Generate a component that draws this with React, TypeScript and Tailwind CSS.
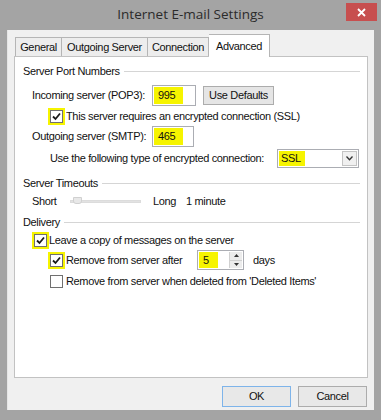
import React from "react";

const font = { fontFamily: "Tahoma, 'Liberation Sans', Arial, sans-serif", letterSpacing: "-0.35px" };

function Check({ checked, hl }: { checked: boolean; hl?: boolean }) {
  const box = (
    <div className="w-[13px] h-[13px] border border-[#707070] bg-white flex items-center justify-center">
      {checked && (
        <svg width="9" height="9" viewBox="0 0 9 9">
          <path d="M1 4.5 L3.5 7 L8 1.5" stroke="#1a1a1a" strokeWidth="1.8" fill="none" />
        </svg>
      )}
    </div>
  );
  if (hl) return <div className="p-[2px] bg-[#f6f400] shrink-0">{box}</div>;
  return <div className="p-[2px] shrink-0">{box}</div>;
}

function Header({ label }: { label: string }) {
  return (
    <div className="flex items-center h-[14px] pl-[8px] pr-[7px] gap-[4px]">
      <span className="whitespace-nowrap">{label}</span>
      <div className="flex-1 h-px bg-[#d5d5d5]" />
    </div>
  );
}

function NumBox({ value, w, hlw }: { value: string; w: string; hlw: string }) {
  return (
    <div className={`${w} shrink-0 h-[21px] border border-[#abadb3] bg-white flex items-stretch p-[1px]`}>
      <div className={`${hlw} bg-[#f6f400] flex items-center pl-[4px]`}>{value}</div>
    </div>
  );
}

export default function App() {
  return (
    <div className="w-[381px] h-[420px] bg-[#a4a4a4] flex flex-col text-[11px] text-[#111] whitespace-nowrap" style={font}>
      <div className="h-[30px] grid grid-cols-[1fr_auto_1fr] items-center">
        <div />
        <div className="text-[13.5px] text-[#2b2b2b] pb-[1px]" style={{ fontFamily: "'Open Sans', 'Noto Sans', sans-serif", letterSpacing: "0px" }}>
          Internet E-mail Settings
        </div>
        <div className="flex justify-end self-start pt-[3px] pr-[4px]">
          <div className="w-[31px] h-[18px] bg-[#c74f4f] flex items-center justify-center">
            <svg width="9" height="9" viewBox="0 0 9 9">
              <path d="M1 1 L8 8 M8 1 L1 8" stroke="white" strokeWidth="1.8" />
            </svg>
          </div>
        </div>
      </div>
      <div className="mx-[7px] mb-[10px] flex-1 bg-[#f0f0f0] border-l border-[#e6e6e6] flex flex-col px-[6px]">
        <div className="h-[26px] flex items-end pl-[1px] pt-[4px]">
          <div className="w-[47px] h-[19px] border border-b-0 border-[#b5b5b5] bg-[#ededed] flex items-center justify-center">General</div>
          <div className="w-[86px] h-[19px] border border-b-0 border-l-0 border-[#b5b5b5] bg-[#ededed] flex items-center justify-center">Outgoing Server</div>
          <div className="w-[61px] h-[19px] border border-b-0 border-l-0 border-[#b5b5b5] bg-[#ededed] flex items-center justify-center">Connection</div>
          <div className="w-[61px] h-[23px] border border-b-0 border-l-0 border-[#b5b5b5] bg-white flex items-start justify-center pt-[3px] -mb-px relative">Advanced</div>
        </div>
        <div className="h-[322px] border border-[#c2c2c2] bg-white flex flex-col pt-[7px]">
          <Header label="Server Port Numbers" />
          <div className="mt-[7px] h-[21px] flex items-center pl-[17px]">
            <span className="w-[120px] shrink-0">Incoming server (POP3):</span>
            <NumBox value="995" w="w-[44px]" hlw="w-[29px]" />
            <div className="ml-[7px] w-[71px] shrink-0 h-[19px] border border-[#acacac] bg-[#e5e5e5] flex items-center justify-center">Use Defaults</div>
          </div>
          <div className="h-[20px] flex items-center pl-[33px] gap-[1px]">
            <Check checked hl />
            <span>This server requires an encrypted connection (SSL)</span>
          </div>
          <div className="h-[21px] flex items-center pl-[17px]">
            <span className="w-[120px] shrink-0">Outgoing server (SMTP):</span>
            <NumBox value="465" w="w-[42px]" hlw="w-[29px]" />
          </div>
          <div className="mt-[1px] h-[20px] flex items-center pl-[35px]">
            <span className="w-[227px] shrink-0">Use the following type of encrypted connection:</span>
            <div className="w-[82px] shrink-0 h-[19px] border border-[#abadb3] bg-white flex items-stretch p-[1px]">
              <div className="w-[26px] bg-[#f6f400] flex items-center pl-[2px]">SSL</div>
              <div className="flex-1" />
              <div className="w-[15px] border border-[#c4c4c4] bg-[#f0f0f0] flex items-center justify-center">
                <svg width="7" height="5" viewBox="0 0 7 5">
                  <path d="M0.5 0.5 L3.5 3.8 L6.5 0.5" stroke="#333" strokeWidth="1.3" fill="none" />
                </svg>
              </div>
            </div>
          </div>
          <div className="mt-[8px]">
            <Header label="Server Timeouts" />
          </div>
          <div className="mt-[1px] h-[20px] flex items-center pl-[17px]">
            <span className="w-[38px] shrink-0">Short</span>
            <div className="w-[71px] shrink-0 h-[10px] relative flex items-center">
              <div className="w-full h-[3px] bg-[#e2e2e2] border border-[#dcdcdc]" />
              <div className="absolute left-[3px] top-[1px] w-[9px] h-[7px] bg-[#e8e8e8] border border-[#d0d0d0] rounded-b-[3px]" />
            </div>
            <span className="ml-[12px]">Long</span>
            <span className="ml-[10px]">1 minute</span>
          </div>
          <div className="mt-[4px]">
            <Header label="Delivery" />
          </div>
          <div className="mt-[2px] h-[19px] flex items-center pl-[17px]">
            <Check checked hl />
            <span>Leave a copy of messages on the server</span>
          </div>
          <div className="h-[20px] flex items-center pl-[33px] gap-[1px]">
            <Check checked hl />
            <span className="w-[130px] shrink-0">Remove from server after</span>
            <div className="w-[47px] shrink-0 h-[20px] border border-[#abadb3] bg-white flex items-stretch p-[1px]">
              <div className="w-[19px] bg-[#f6f400] flex items-center pl-[4px]">5</div>
              <div className="flex-1" />
              <div className="w-[13px] flex flex-col border-l border-[#d0d0d0]">
                <div className="flex-1 bg-[#ececec] border-b border-[#d0d0d0] flex items-center justify-center">
                  <svg width="5" height="3" viewBox="0 0 5 3"><path d="M0 3 L2.5 0 L5 3 Z" fill="#333" /></svg>
                </div>
                <div className="flex-1 bg-[#ececec] flex items-center justify-center">
                  <svg width="5" height="3" viewBox="0 0 5 3"><path d="M0 0 L2.5 3 L5 0 Z" fill="#333" /></svg>
                </div>
              </div>
            </div>
            <span className="ml-[8px]">days</span>
          </div>
          <div className="mt-[1px] h-[21px] flex items-center pl-[33px] gap-[1px]">
            <Check checked={false} />
            <span>Remove from server when deleted from 'Deleted Items'</span>
          </div>
        </div>
        <div className="flex justify-end gap-[7px] mt-[8px] pr-[1px]">
          <div className="w-[69px] h-[21px] border border-[#7eb4ea] bg-[#e8e8e8] flex items-center justify-center">OK</div>
          <div className="w-[69px] h-[21px] border border-[#acacac] bg-[#e8e8e8] flex items-center justify-center">Cancel</div>
        </div>
      </div>
    </div>
  );
}
